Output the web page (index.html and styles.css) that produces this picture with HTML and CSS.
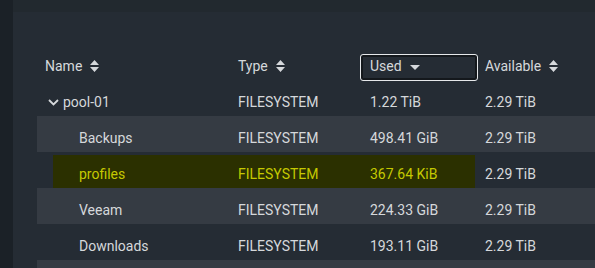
FILE: index.html
```html
<!DOCTYPE html>
<html>
<head>
<meta charset="utf-8">
<link rel="stylesheet" href="styles.css">
</head>
<body>
<div class="app">
  <div class="sidebar"></div>
  <div class="main">
    <div class="topbar"></div>
    <div class="table">
      <div class="row head">
        <div class="cell">Name <svg class="sort" viewBox="0 0 9 12"><path d="M4.5 0L9 5H0z M4.5 12L0 7h9z"/></svg></div>
        <div class="cell">Type <svg class="sort" viewBox="0 0 9 12"><path d="M4.5 0L9 5H0z M4.5 12L0 7h9z"/></svg></div>
        <div class="cell used-head">Used <svg class="caret" viewBox="0 0 10 5"><path d="M0 0h10L5 5z"/></svg></div>
        <div class="cell">Available <svg class="sort" viewBox="0 0 9 12"><path d="M4.5 0L9 5H0z M4.5 12L0 7h9z"/></svg></div>
      </div>
      <div class="row">
        <div class="cell pool"><svg class="chev" viewBox="0 0 11 7"><path d="M1 1l4.5 4.5L10 1" fill="none" stroke="currentColor" stroke-width="1.8"/></svg>pool-01</div>
        <div class="cell">FILESYSTEM</div>
        <div class="cell num">1.22 TiB</div>
        <div class="cell">2.29 TiB</div>
      </div>
      <div class="row stripe">
        <div class="cell child">Backups</div>
        <div class="cell">FILESYSTEM</div>
        <div class="cell num">498.41 GiB</div>
        <div class="cell">2.29 TiB</div>
      </div>
      <div class="row marked">
        <div class="cell child hl">profiles</div>
        <div class="cell hl">FILESYSTEM</div>
        <div class="cell num hl">367.64 KiB</div>
        <div class="cell">2.29 TiB</div>
      </div>
      <div class="row stripe">
        <div class="cell child">Veeam</div>
        <div class="cell">FILESYSTEM</div>
        <div class="cell num">224.33 GiB</div>
        <div class="cell">2.29 TiB</div>
      </div>
      <div class="row">
        <div class="cell child">Downloads</div>
        <div class="cell">FILESYSTEM</div>
        <div class="cell num">193.11 GiB</div>
        <div class="cell">2.29 TiB</div>
      </div>
      <div class="row stripe partial"></div>
    </div>
  </div>
</div>
</body>
</html>
```

FILE: styles.css
```css
* { box-sizing: border-box; }
html, body { margin: 0; padding: 0; }
body {
  width: 595px;
  height: 268px;
  overflow: hidden;
  background: #1b2127;
  font-family: Roboto, "Liberation Sans", sans-serif;
  font-size: 14px;
  color: #d5d8db;
}
.app { display: flex; height: 268px; overflow: hidden; }
.sidebar { width: 13px; flex: none; background: #1b2127; }
.main { flex: 1; background: #252c34; min-width: 0; }
.topbar { height: 12px; background: #22292f; }
.table { margin-top: 42px; margin-left: 24px; }
.row {
  display: grid;
  grid-template-columns: 193px 130px 117px 1fr;
  height: 36px;
  align-items: start;
  position: relative;
}
.row.stripe { background: #353b43; }
.row.partial { height: 8px; }
.cell {
  position: relative;
  z-index: 1;
  padding: 14px 0 0 8px;
  line-height: 16px;
  white-space: nowrap;
  display: flex;
  align-items: center;
}
.cell.num { padding-left: 10px; }
.row.head { height: 26px; }
.row.head .cell { padding-top: 4px; }
.row.head .used-head {
  height: 27px;
  width: 118px;
  padding: 3px 9px 6px 9px;
  border: 1px solid #e6e8ea;
  border-radius: 3px;
  box-shadow: inset 0 0 0 2px #14181c;
}
.sort { width: 9px; height: 12px; margin-left: 8px; fill: #d5d8db; }
.caret { width: 10px; height: 5px; margin-left: 8px; margin-top: 3px; fill: #d5d8db; }
.pool { padding-left: 11px; }
.chev { width: 11px; height: 7px; margin-right: 4px; margin-top: 1px; }
.child { padding-left: 42px; }
.row.marked::before {
  content: "";
  position: absolute;
  left: 16px;
  top: 3px;
  width: 422px;
  height: 39px;
  z-index: 0;
  background: linear-gradient(#2b3000 0, #2b3000 33px, #333700 33px, #333700 39px);
}
.hl { color: #c5c900; }
```
